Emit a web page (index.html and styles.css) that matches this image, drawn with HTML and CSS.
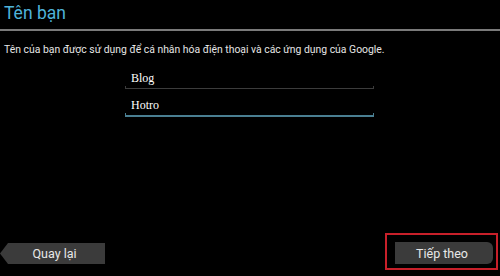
FILE: index.html
```html
<!DOCTYPE html>
<html lang="vi">
<head>
    <meta charset="UTF-8">
    <meta name="viewport" content="width=device-width, initial-scale=1.0">
    <title>Tên bạn</title>
    <link rel="stylesheet" href="styles.css">
</head>
<body>
    <div class="screen">
        <div class="screen-header">
            <h1>Tên bạn</h1>
        </div>

        <p class="intro">Tên của bạn được sử dụng để cá nhân hóa điện thoại và các ứng dụng của Google.</p>

        <div class="name-form">
            <div class="field">
                <div class="field-value">Blog</div>
                <div class="field-line"></div>
            </div>
            <div class="field field-active">
                <div class="field-value">Hotro</div>
                <div class="field-line"></div>
            </div>
        </div>

        <div class="screen-footer">
            <button class="nav-button back-button">Quay lại</button>
            <div class="highlight">
                <button class="nav-button next-button">Tiếp theo</button>
            </div>
        </div>
    </div>
</body>
</html>
```

FILE: styles.css
```css
body {
    margin: 0;
    background: #000;
    font-family: 'Roboto', 'Noto Sans', sans-serif;
    color: #e6e6e6;
}

.screen {
    height: 276px;
    display: flex;
    flex-direction: column;
}

.screen-header {
    height: 29px;
    border-bottom: 2px solid #7a7a7a;
    padding-left: 4px;
}

.screen-header h1 {
    margin: 0;
    padding-top: 3px;
    font-size: 17.5px;
    font-weight: normal;
    line-height: 20px;
    color: #4fb3d9;
}

.intro {
    margin: 12px 0 0 4px;
    font-size: 10.4px;
    line-height: 13px;
}

.name-form {
    margin: 5px 0 0 125px;
    width: 249px;
}

.field {
    height: 28px;
    display: flex;
    flex-direction: column;
    justify-content: flex-end;
}

.field-value {
    padding-left: 6px;
    font-family: 'Liberation Serif', serif;
    font-size: 12px;
    line-height: 14px;
    color: #fff;
}

.field-line {
    height: 2px;
    margin-top: 1px;
    border: 1px solid #3c3c3c;
    border-top: none;
}

.field-active .field-line {
    border-color: #4a7f92;
    border-bottom-width: 2px;
}

.screen-footer {
    margin-top: auto;
    margin-bottom: 6px;
    display: flex;
    justify-content: space-between;
    align-items: flex-end;
}

.nav-button {
    border: none;
    background: #3b3b3b;
    color: #e8e8e8;
    font-family: 'Roboto', 'Noto Sans', sans-serif;
    font-size: 12.5px;
    height: 21px;
    padding: 0;
}

.back-button {
    width: 105px;
    margin-bottom: 6px;
    padding-left: 4px;
    clip-path: polygon(0 50%, 8px 0, 100% 0, 100% 100%, 8px 100%);
}

.highlight {
    border: 2px solid #c8202a;
    padding: 7px 3px 4px 8px;
    margin-right: 2px;
}

.next-button {
    width: 98px;
    height: 22px;
    border-radius: 0 6px 6px 0;
    padding-right: 4px;
}
```
